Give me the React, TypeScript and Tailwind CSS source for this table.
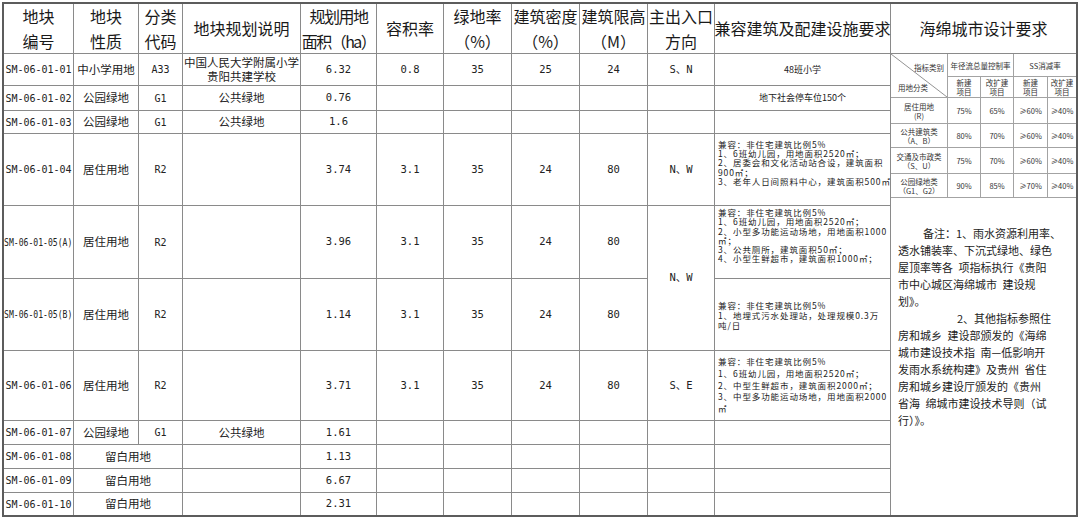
import React from "react";

const CJK = "font-['Noto_Sans_CJK_SC',sans-serif]";
const MONO = "font-['DejaVu_Sans_Mono','Noto_Sans_CJK_SC',monospace]";
const ID = `${MONO} text-[10px] text-[#222]`;
const ZH = `${CJK} text-[11.5px] text-[#222]`;
const NUM = `${MONO} text-[10.5px] text-[#222]`;

type Row = {
  id: string;
  squeeze?: boolean;
  kind?: string;
  code?: string;
  blank?: boolean;
  desc?: string[];
  area: string;
  vals?: [string, string, string, string];
  dir?: string;
  dirSpan?: boolean;
  skipDir?: boolean;
  compat: React.ReactNode;
};

function C({
  children,
  className = "",
}: {
  children?: React.ReactNode;
  className?: string;
}) {
  return (
    <div
      className={`flex items-center justify-center bg-white text-center ${className}`}
    >
      {children}
    </div>
  );
}

function Head({ lines, className = "" }: { lines: string[]; className?: string }) {
  return (
    <div
      className={`flex flex-col items-center justify-center whitespace-nowrap bg-white text-[16px] leading-[25px] text-[#1a1a1a] ${CJK} ${className}`}
    >
      {lines.map((l, i) => (
        <div key={i}>{l}</div>
      ))}
    </div>
  );
}

// small-text cell of the 兼容 column, one div per printed line
function Compat({ lines, className }: { lines: string[]; className: string }) {
  return (
    <div
      className={`flex flex-col items-start bg-white pl-[3px] text-left text-[8.5px] tracking-[0.9px] text-[#222] ${CJK} ${className}`}
    >
      {lines.map((l, i) => (
        <div key={i} className="whitespace-nowrap">
          {l}
        </div>
      ))}
    </div>
  );
}

const ROWS: Row[] = [
  {
    id: "SM-06-01-01",
    kind: "中小学用地",
    code: "A33",
    desc: ["中国人民大学附属小学", "贵阳共建学校"],
    area: "6.32",
    vals: ["0.8", "35", "25", "24"],
    dir: "S、N",
    compat: <C className={`${CJK} text-[9px] text-[#222]`}>48班小学</C>,
  },
  {
    id: "SM-06-01-02",
    kind: "公园绿地",
    code: "G1",
    desc: ["公共绿地"],
    area: "0.76",
    dir: "",
    compat: <C className={`${CJK} text-[9px] text-[#222]`}>地下社会停车位150个</C>,
  },
  {
    id: "SM-06-01-03",
    kind: "公园绿地",
    code: "G1",
    desc: ["公共绿地"],
    area: "1.6",
    dir: "",
    compat: <C />,
  },
  {
    id: "SM-06-01-04",
    kind: "居住用地",
    code: "R2",
    area: "3.74",
    vals: ["3.1", "35", "24", "80"],
    dir: "N、W",
    compat: (
      <Compat
        className="justify-start pt-[6px] leading-[9.2px]"
        lines={[
          "兼容：非住宅建筑比例5%",
          "1、6班幼儿园，用地面积2520㎡；",
          "2、居委会和文化活动站合设，建筑面积",
          "900㎡；",
          "3、老年人日间照料中心，建筑面积500㎡",
        ]}
      />
    ),
  },
  {
    id: "SM-06-01-05(A)",
    squeeze: true,
    kind: "居住用地",
    code: "R2",
    area: "3.96",
    vals: ["3.1", "35", "24", "80"],
    dir: "N、W",
    dirSpan: true,
    compat: (
      <Compat
        className="justify-start pt-[2px] leading-[9.3px]"
        lines={[
          "兼容：非住宅建筑比例5%",
          "1、6班幼儿园，用地面积2520㎡；",
          "2、小型多功能运动场地，用地面积1000",
          "㎡；",
          "3、公共厕所，建筑面积50㎡；",
          "4、小型生鲜超市，建筑面积1000㎡；",
        ]}
      />
    ),
  },
  {
    id: "SM-06-01-05(B)",
    squeeze: true,
    kind: "居住用地",
    code: "R2",
    area: "1.14",
    vals: ["3.1", "35", "24", "80"],
    skipDir: true,
    compat: (
      <Compat
        className="justify-center leading-[10px]"
        lines={[
          "兼容：非住宅建筑比例5%",
          "1、地埋式污水处理站，处理规模0.3万",
          "吨/日",
        ]}
      />
    ),
  },
  {
    id: "SM-06-01-06",
    kind: "居住用地",
    code: "R2",
    area: "3.71",
    vals: ["3.1", "35", "24", "80"],
    dir: "S、E",
    compat: (
      <Compat
        className="justify-center leading-[11.7px]"
        lines={[
          "兼容：非住宅建筑比例5%",
          "1、6班幼儿园，用地面积2520㎡；",
          "2、中型生鲜超市，建筑面积2000㎡；",
          "3、中型多功能运动场地，用地面积2000",
          "㎡",
        ]}
      />
    ),
  },
  {
    id: "SM-06-01-07",
    kind: "公园绿地",
    code: "G1",
    desc: ["公共绿地"],
    area: "1.61",
    dir: "",
    compat: <C />,
  },
  { id: "SM-06-01-08", blank: true, area: "1.13", dir: "", compat: <C /> },
  { id: "SM-06-01-09", blank: true, area: "6.67", dir: "", compat: <C /> },
  { id: "SM-06-01-10", blank: true, area: "2.31", dir: "", compat: <C /> },
];

function DataRow({ r }: { r: Row }) {
  const vals = r.vals ?? ["", "", "", ""];
  return (
    <>
      <C className={`overflow-visible whitespace-nowrap ${ID}`}>
        {r.squeeze ? (
          <span className="inline-block scale-x-[0.81] whitespace-nowrap">{r.id}</span>
        ) : (
          r.id
        )}
      </C>
      {r.blank ? (
        <C className={`col-span-2 ${ZH}`}>留白用地</C>
      ) : (
        <>
          <C className={`whitespace-nowrap ${ZH}`}>{r.kind}</C>
          <C className={`${MONO} text-[10px] text-[#222]`}>{r.code}</C>
        </>
      )}
      <C className={`flex-col whitespace-nowrap leading-[13.5px] ${ZH}`}>
        {r.desc?.map((d, i) => (
          <div key={i}>{d}</div>
        ))}
      </C>
      <C className={NUM}>{r.area}</C>
      {vals.map((v, i) => (
        <C key={i} className={NUM}>
          {v}
        </C>
      ))}
      {r.skipDir ? null : (
        <C className={`${NUM} ${r.dirSpan ? "row-span-2" : ""}`}>{r.dir}</C>
      )}
      {r.compat}
    </>
  );
}

function S({
  children,
  className = "",
}: {
  children?: React.ReactNode;
  className?: string;
}) {
  return (
    <div
      className={`flex flex-col items-center justify-center whitespace-nowrap bg-white text-center ${className}`}
    >
      {children}
    </div>
  );
}

const SPONGE_ROWS = [
  ["居住用地", "(R)", "75%", "65%", "≥60%", "≥40%"],
  ["公共建筑类", "（A、B）", "80%", "70%", "≥60%", "≥40%"],
  ["交通及市政类", "（S、U）", "75%", "70%", "≥60%", "≥40%"],
  ["公园绿地类", "（G1、G2）", "90%", "85%", "≥70%", "≥40%"],
];

const NOTES: Array<{ text: string; indent?: string }> = [
  { text: "备注：1、雨水资源利用率、", indent: "pl-[25px]" },
  { text: "透水铺装率、下沉式绿地、绿色" },
  { text: "屋顶率等各\u2002项指标执行《贵阳" },
  { text: "市中心城区海绵城市\u2002建设规" },
  { text: "划》。" },
  { text: "2、其他指标参照住", indent: "pl-[59px]" },
  { text: "房和城乡\u2002建设部颁发的《海绵" },
  { text: "城市建设技术指\u2002南—低影响开" },
  { text: "发雨水系统构建》及贵州\u2002省住" },
  { text: "房和城乡建设厅颁发的《贵州" },
  { text: "省海\u2002绵城市建设技术导则（试" },
  { text: "行）》。" },
];

function Sponge() {
  return (
    <div
      className={`grid h-full grid-cols-[56px_32px_32px_33px_28px] grid-rows-[22px_20px_25px_23px_25px_23px_317px] gap-px bg-[#a3a3a3] text-[7.5px] leading-[9px] text-[#333] ${CJK}`}
    >
      <div className="relative row-span-2 bg-white">
        <svg
          className="absolute inset-0 h-full w-full"
          viewBox="0 0 56 43"
          preserveAspectRatio="none"
          aria-hidden="true"
        >
          <line x1="0" y1="0" x2="56" y2="43" stroke="#777" strokeWidth="0.8" />
        </svg>
        <span className="absolute right-[3px] top-[9px] whitespace-nowrap">指标类别</span>
        <span className="absolute bottom-[5px] left-[7px] whitespace-nowrap">用地分类</span>
      </div>
      <S className="col-span-2">年径流总量控制率</S>
      <S className="col-span-2">SS消减率</S>
      <S>
        <div>新建</div>
        <div>项目</div>
      </S>
      <S>
        <div>改扩建</div>
        <div>项目</div>
      </S>
      <S>
        <div>新建</div>
        <div>项目</div>
      </S>
      <S>
        <div>改扩建</div>
        <div>项目</div>
      </S>
      {SPONGE_ROWS.map((r) => (
        <React.Fragment key={r[0]}>
          <S>
            <div>{r[0]}</div>
            <div>{r[1]}</div>
          </S>
          <S>{r[2]}</S>
          <S>{r[3]}</S>
          <S>{r[4]}</S>
          <S>{r[5]}</S>
        </React.Fragment>
      ))}
      <div className="col-span-5 bg-white pl-[7px] pt-[27px] text-[11px] leading-[17px] text-[#222]">
        {NOTES.map((n, i) => (
          <div key={i} className={`whitespace-nowrap ${n.indent ?? ""}`}>
            {n.text}
          </div>
        ))}
      </div>
    </div>
  );
}

export default function App() {
  return (
    <div className="h-[518px] w-[1080px] overflow-hidden bg-white pl-[2px] pt-[2px]">
      <div className="h-[515px] w-[1076px] border-2 border-[#5c5c5c]">
        <div className="grid grid-cols-[69px_64px_43px_117px_75px_66px_67px_67px_67px_66px_175px_185px] grid-rows-[49px_31px_24px_22px_71px_72px_71px_69px_23px_23px_23px_22px] gap-px bg-[#8a8a8a]">
          <Head lines={["地块", "编号"]} />
          <Head lines={["地块", "性质"]} />
          <Head lines={["分类", "代码"]} />
          <Head lines={["地块规划说明"]} />
          <Head lines={["规划用地", "面积（ha）"]} className="tracking-[-1.5px]" />
          <Head lines={["容积率"]} />
          <Head lines={["绿地率", "（%）"]} />
          <Head lines={["建筑密度", "（%）"]} />
          <Head lines={["建筑限高", "（M）"]} />
          <Head lines={["主出入口", "方向"]} />
          <Head lines={["兼容建筑及配建设施要求"]} className="text-[15.5px]" />
          <Head lines={["海绵城市设计要求"]} className="text-[16px]" />

          {ROWS.map((r, i) => (
            <React.Fragment key={r.id}>
              <DataRow r={r} />
              {i === 0 ? (
                <div className="row-span-11 bg-white">
                  <Sponge />
                </div>
              ) : null}
            </React.Fragment>
          ))}
        </div>
      </div>
    </div>
  );
}
